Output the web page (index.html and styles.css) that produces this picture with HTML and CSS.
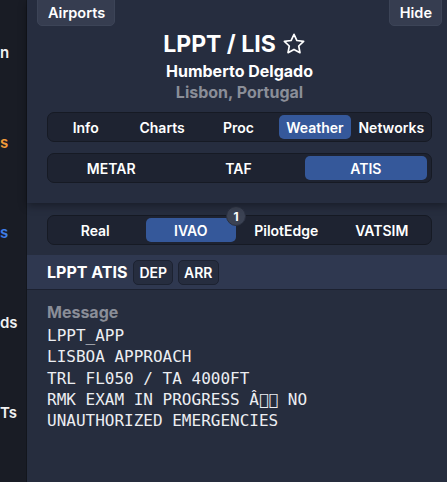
FILE: index.html
```html
<!DOCTYPE html>
<html>
<head>
<meta charset="utf-8">
<link rel="stylesheet" href="styles.css">
</head>
<body>
<div class="app">
  <aside class="sidebar">
    <div class="nav-item">n</div>
    <div class="nav-item orange">s</div>
    <div class="nav-item blue">s</div>
    <div class="nav-item">ds</div>
    <div class="nav-item">Ts</div>
  </aside>
  <main class="main">
    <header class="head">
      <div class="toprow">
        <button class="btn">Airports</button>
        <button class="btn">Hide</button>
      </div>
      <h1 class="title">LPPT / LIS <svg class="star" viewBox="1.5 1.5 21 21" width="22" height="22"><path d="M12 2.8l2.8 5.9 6.4.8-4.7 4.4 1.2 6.4L12 17.2l-5.7 3.1 1.2-6.4-4.7-4.4 6.4-.8z" fill="none" stroke="#fff" stroke-width="1.6" stroke-linejoin="round"/></svg></h1>
      <div class="name">Humberto Delgado</div>
      <div class="city">Lisbon, Portugal</div>
      <div class="seg seg5">
        <div class="tab">Info</div>
        <div class="tab">Charts</div>
        <div class="tab">Proc</div>
        <div class="tab active">Weather</div>
        <div class="tab">Networks</div>
      </div>
      <div class="seg seg3">
        <div class="tab">METAR</div>
        <div class="tab">TAF</div>
        <div class="tab active">ATIS</div>
      </div>
    </header>
    <div class="netwrap">
      <div class="seg seg4">
        <div class="tab">Real</div>
        <div class="tab active">IVAO<span class="badge">1</span></div>
        <div class="tab">PilotEdge</div>
        <div class="tab">VATSIM</div>
      </div>
    </div>
    <div class="atisbar">
      <span class="atis-title">LPPT ATIS</span>
      <button class="chip">DEP</button>
      <button class="chip">ARR</button>
    </div>
    <section class="msg">
      <div class="msg-label">Message</div>
      <pre class="msg-body">LPPT_APP
LISBOA APPROACH
TRL FL050 / TA 4000FT
RMK EXAM IN PROGRESS &#xC2;&#xE000;&#xE001; NO
UNAUTHORIZED EMERGENCIES</pre>
    </section>
  </main>
</div>
</body>
</html>
```
FILE: styles.css
```css
* { box-sizing: border-box; }
html, body { margin: 0; padding: 0; }
body {
  width: 447px;
  height: 482px;
  overflow: hidden;
  background: #262d3e;
  font-family: Inter, "Noto Sans", sans-serif;
  color: #fff;
}
.app {
  display: flex;
  height: 482px;
}
.sidebar {
  width: 27px;
  flex: none;
  background: #191c25;
  border-right: 1px solid #13161d;
  padding-top: 7px;
  overflow: hidden;
}
.nav-item {
  height: 90px;
  display: flex;
  align-items: center;
  font-weight: 600;
  font-size: 15px;
  color: #f1f1f1;
  white-space: nowrap;
}
.nav-item.orange { color: #f29b3a; }
.nav-item.blue { color: #3f7ee8; }
.main {
  flex: 1;
  min-width: 0;
  display: flex;
  flex-direction: column;
  background: #262d3e;
}
.head {
  background: #262d3f;
  padding: 0 5px 20px 10px;
  box-shadow: 0 3px 8px rgba(0, 0, 0, 0.35);
  position: relative;
  z-index: 1;
}
.toprow {
  display: flex;
  justify-content: space-between;
  margin-top: -6px;
}
.btn {
  font-family: inherit;
  font-weight: 600;
  font-size: 14.5px;
  color: #fff;
  background: #363d50;
  border: 1px solid #3c4457;
  border-radius: 5px;
  height: 32px;
  padding: 4px 9px 0 10px;
}
.title {
  margin: 3px 0 0;
  font-size: 23px;
  font-weight: 700;
  text-align: center;
  display: flex;
  justify-content: center;
  align-items: center;
  gap: 7px;
  line-height: 30px;
}
.star { display: block; margin-right: 11px; }
.name {
  text-align: center;
  font-weight: 700;
  font-size: 16px;
  margin-top: 2px;
  line-height: 20px;
}
.city {
  text-align: center;
  font-weight: 700;
  font-size: 16px;
  color: #8a8e98;
  line-height: 22px;
}
.seg {
  margin: 0 10px 0 10px;
  display: grid;
  gap: 5px;
  background: #1e2331;
  border: 1px solid #161a24;
  border-radius: 7px;
  padding: 2px 4px 2px 2px;
}
.seg5 { grid-template-columns: repeat(5, 1fr); margin-top: 9px; }
.seg3 { grid-template-columns: repeat(3, 1fr); margin-top: 11px; }
.seg4 { grid-template-columns: repeat(4, 1fr); }
.tab {
  position: relative;
  height: 24px;
  display: flex;
  align-items: center;
  justify-content: center;
  font-size: 14px;
  font-weight: 600;
  color: #fff;
  border-radius: 5px;
  white-space: nowrap;
}
.tab.active { background: #35589a; }
.badge {
  position: absolute;
  top: -12px;
  right: -10px;
  width: 20px;
  height: 20px;
  border-radius: 50%;
  background: #3b4253;
  border: 1px solid #2a3040;
  color: #fff;
  font-size: 12px;
  font-weight: 700;
  display: flex;
  align-items: center;
  justify-content: center;
}
.netwrap {
  padding: 12px 5px 10px 10px;
}
.atisbar {
  background: #2f3850;
  border-bottom: 1px solid #1c2130;
  height: 35px;
  display: flex;
  align-items: center;
  gap: 5px;
  padding-left: 20px;
}
.atis-title {
  font-weight: 700;
  font-size: 16px;
  margin-right: 1px;
}
.chip {
  font-family: inherit;
  font-weight: 600;
  font-size: 14px;
  color: #fff;
  background: #262d3f;
  border: 1px solid #1c2231;
  border-radius: 5px;
  height: 25px;
  padding: 0 5px;
}
.msg {
  padding: 12px 20px;
}
.msg-label {
  font-weight: 700;
  font-size: 16px;
  color: #8a8e98;
  line-height: 20px;
}
.msg-body {
  margin: 3px 0 0;
  font-family: "DejaVu Sans Mono", monospace;
  font-size: 16px;
  line-height: 21.3px;
  color: #eceef2;
  white-space: pre;
}
```
